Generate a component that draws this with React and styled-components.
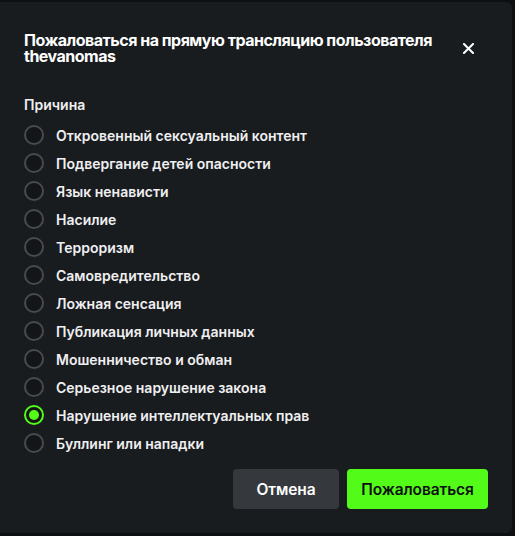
import React, { useState } from "react";
import styled, { createGlobalStyle } from "styled-components";

const Global = createGlobalStyle`
  html, body { margin: 0; padding: 0; background: #0e0f10; }
  body { font-family: Inter, "Noto Sans", "Liberation Sans", sans-serif; -webkit-font-smoothing: antialiased; }
  * { box-sizing: border-box; }
`;

const Page = styled.div`
  width: 515px;
  height: 536px;
  background: #0e0f10;
  padding-top: 2px;
  overflow: hidden;
`;

const Dialog = styled.div`
  width: 512px;
  height: 531px;
  background: #191c1f;
  border-radius: 0 6px 6px 0;
  padding: 30px 24px 24px 24px;
  display: flex;
  flex-direction: column;
  color: #efeff1;
`;

const Header = styled.div`
  display: flex;
  justify-content: space-between;
  align-items: center;
  gap: 8px;
`;

const Title = styled.h2`
  margin: 0;
  flex: 1;
  font-size: 16px;
  line-height: 16px;
  font-weight: 700;
  color: #ffffff;
  letter-spacing: -0.5px;
`;

const Close = styled.button`
  background: none;
  border: none;
  padding: 0;
  width: 20px;
  height: 20px;
  display: flex;
  align-items: center;
  justify-content: center;
  margin-right: 10px;
  color: #fff;
  cursor: pointer;
`;

const Label = styled.div`
  margin-top: 31px;
  font-size: 14px;
  line-height: 20px;
  font-weight: 600;
  color: #efeff1;
`;

const List = styled.div`
  display: flex;
  flex-direction: column;
  margin-top: 6px;
`;

const Option = styled.label`
  display: flex;
  align-items: center;
  gap: 12px;
  height: 28px;
  font-size: 14px;
  font-weight: 600;
  color: #efeff1;
  cursor: pointer;
`;

const Circle = styled.span`
  width: 20px;
  height: 20px;
  border-radius: 50%;
  flex-shrink: 0;
  border: 2px solid ${(p) => (p.$on ? "#53fc18" : "#474a4f")};
  background: #141517;
  display: flex;
  align-items: center;
  justify-content: center;
  &::after {
    content: "";
    width: 10px;
    height: 10px;
    border-radius: 50%;
    background: #53fc18;
    display: ${(p) => (p.$on ? "block" : "none")};
  }
`;

const Footer = styled.div`
  margin-top: auto;
  display: flex;
  justify-content: flex-end;
  gap: 8px;
`;

const Button = styled.button`
  height: 40px;
  width: ${(p) => (p.$primary ? "141px" : "106px")};
  padding: 0;
  border: none;
  border-radius: 4px;
  font-family: inherit;
  font-size: 15.5px;
  font-weight: 600;
  letter-spacing: -0.1px;
  background: ${(p) => (p.$primary ? "#53fc18" : "#35393d")};
  color: ${(p) => (p.$primary ? "#0b0e0f" : "#ffffff")};
  cursor: pointer;
`;

const reasons = [
  "Откровенный сексуальный контент",
  "Подвергание детей опасности",
  "Язык ненависти",
  "Насилие",
  "Терроризм",
  "Самовредительство",
  "Ложная сенсация",
  "Публикация личных данных",
  "Мошенничество и обман",
  "Серьезное нарушение закона",
  "Нарушение интеллектуальных прав",
  "Буллинг или нападки",
];

export default function App() {
  const [sel, setSel] = useState(10);
  return (
    <Page>
      <Global />
      <Dialog>
        <Header>
          <Title>Пожаловаться на прямую трансляцию пользователя thevanomas</Title>
          <Close aria-label="close">
            <svg width="11" height="11" viewBox="0 0 11 11">
              <path d="M1 1L10 10M10 1L1 10" stroke="#fff" strokeWidth="2" strokeLinecap="square" />
            </svg>
          </Close>
        </Header>
        <Label>Причина</Label>
        <List>
          {reasons.map((r, i) => (
            <Option key={r} onClick={() => setSel(i)}>
              <Circle $on={sel === i} />
              {r}
            </Option>
          ))}
        </List>
        <Footer>
          <Button>Отмена</Button>
          <Button $primary>Пожаловаться</Button>
        </Footer>
      </Dialog>
    </Page>
  );
}
